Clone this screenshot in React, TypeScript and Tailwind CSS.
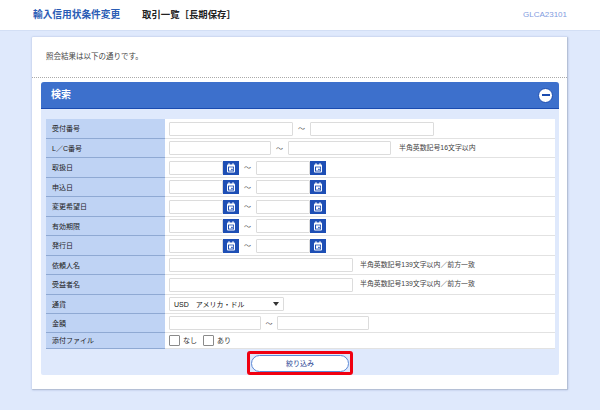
import type { ReactNode } from 'react';

const font = { jp: "font-['Liberation_Sans','Noto_Sans_CJK_JP',sans-serif]" };

function TextBox({ className }: { className: string }) {
  return <div className={`h-[14px] shrink-0 rounded-[1px] border border-[#dcdcdc] bg-white ${className}`} />;
}

function Tilde({ className = '' }: { className?: string }) {
  return <span className={`shrink-0 text-center text-[7px] leading-none text-[#555] ${className}`}>～</span>;
}

function CalendarButton() {
  return (
    <div className="flex h-[14px] w-[16px] shrink-0 items-center justify-center bg-[#1e4fb5]">
      <svg width="10" height="10" viewBox="0 0 10 10" aria-hidden="true">
        <rect x="1" y="1.5" width="8" height="8" rx="1" fill="#fff" />
        <rect x="2.4" y="0.3" width="1.2" height="2" fill="#fff" />
        <rect x="6.4" y="0.3" width="1.2" height="2" fill="#fff" />
        <rect x="2" y="3.6" width="6" height="4.9" fill="#1e4fb5" />
        <rect x="3" y="4.4" width="4.2" height="3.2" fill="#fff" />
        <rect x="5.2" y="5.8" width="1.5" height="1.4" fill="#1e4fb5" />
      </svg>
    </div>
  );
}

function DateRange() {
  return (
    <>
      <TextBox className="w-[54px]" />
      <CalendarButton />
      <Tilde className="w-[17px]" />
      <TextBox className="w-[54px]" />
      <CalendarButton />
    </>
  );
}

function Note({ children, className = '' }: { children: ReactNode; className?: string }) {
  return <span className={`whitespace-nowrap text-[6.9px] leading-none text-[#444] ${className}`}>{children}</span>;
}

function Check({ label }: { label: string }) {
  return (
    <div className="flex items-center">
      <div className="h-[11px] w-[11px] rounded-[1px] border border-[#8a8a8a] bg-white" />
      <span className="ml-[3px] text-[7px] leading-none text-[#333]">{label}</span>
    </div>
  );
}

const rows: { label: string; height: string; content: ReactNode }[] = [
  {
    label: '受付番号',
    height: 'h-[20px]',
    content: (
      <>
        <TextBox className="w-[124px]" />
        <Tilde className="w-[17px]" />
        <TextBox className="w-[124px]" />
      </>
    ),
  },
  {
    label: 'L／C番号',
    height: 'h-[19px]',
    content: (
      <>
        <TextBox className="w-[102px]" />
        <Tilde className="w-[17px]" />
        <TextBox className="w-[103px]" />
        <Note className="ml-[8px]">半角英数記号16文字以内</Note>
      </>
    ),
  },
  { label: '取扱日', height: 'h-[20px]', content: <DateRange /> },
  { label: '申込日', height: 'h-[19px]', content: <DateRange /> },
  { label: '変更希望日', height: 'h-[20px]', content: <DateRange /> },
  { label: '有効期限', height: 'h-[19px]', content: <DateRange /> },
  { label: '発行日', height: 'h-[20px]', content: <DateRange /> },
  {
    label: '依頼人名',
    height: 'h-[19px]',
    content: (
      <>
        <TextBox className="w-[184px]" />
        <Note className="ml-[7px]">半角英数記号139文字以内／前方一致</Note>
      </>
    ),
  },
  {
    label: '受益者名',
    height: 'h-[20px]',
    content: (
      <>
        <TextBox className="w-[184px]" />
        <Note className="ml-[7px]">半角英数記号139文字以内／前方一致</Note>
      </>
    ),
  },
  {
    label: '通貨',
    height: 'h-[19px]',
    content: (
      <div className="flex h-[14px] w-[115px] items-center justify-between rounded-[1px] border border-[#dcdcdc] bg-white pl-[4px] pr-[2px]">
        <span className="text-[7px] leading-none text-[#111]">
          USD<span className="ml-[7px]">アメリカ・ドル</span>
        </span>
        <svg width="8" height="6" viewBox="0 0 8 6" className="mr-[1px]" aria-hidden="true">
          <path d="M1 1h6L4 5z" fill="#333" />
        </svg>
      </div>
    ),
  },
  {
    label: '金額',
    height: 'h-[19px]',
    content: (
      <>
        <TextBox className="w-[92px]" />
        <Tilde className="w-[16px]" />
        <TextBox className="w-[92px]" />
      </>
    ),
  },
  {
    label: '添付ファイル',
    height: 'h-[16px]',
    content: (
      <div className="flex items-center gap-[6px]">
        <Check label="なし" />
        <Check label="あり" />
      </div>
    ),
  },
];

export default function App() {
  return (
    <div className={`h-[410px] w-[600px] overflow-hidden bg-[#dfe9fc] ${font.jp}`}>
      <header className="flex h-[31px] items-center border-b border-[#d3dff5] bg-white px-[33px]">
        <h1 className="w-[109px] whitespace-nowrap text-[9.7px] font-bold leading-none text-[#2a5cb5]">輸入信用状条件変更</h1>
        <h2 className="whitespace-nowrap text-[9.4px] font-bold leading-none text-[#222]">取引一覧［長期保存］</h2>
        <span className="ml-auto text-[8px] leading-none text-[#7f9be0]">GLCA23101</span>
      </header>

      <main className="mx-[32px] mt-[6px] h-[353px] rounded-[1px] border-b border-r border-[#b5c0d6] bg-white shadow-[0_0_2px_rgba(120,140,190,0.6)]">
        <p className="flex h-[40px] items-center pl-[14px] text-[7.5px] leading-none text-[#444]">照会結果は以下の通りです。</p>
        <div className="border-t border-dotted border-[#aaa]" />

        <section className="ml-[9px] mr-[8px] mt-[4px] rounded-t-[3px] rounded-b-[2px] bg-[#dfe9fc]">
          <div className="flex h-[27px] items-center justify-between rounded-t-[3px] border-b border-[#1a4bb0] bg-[#3d70cc] pl-[10px] pr-[6px]">
            <span className="text-[10px] font-bold leading-none text-white">検索</span>
            <div className="flex h-[15px] w-[15px] items-center justify-center rounded-full border border-[#1a4bb0] bg-white">
              <div className="h-[1.5px] w-[8px] bg-[#1a4bb0]" />
            </div>
          </div>

          <div className="ml-[5px] mt-[10px] w-[509px] bg-white">
            {rows.map((row) => (
              <div key={row.label} className={`flex ${row.height} border-b border-[#e2e2e2]`}>
                <div className="-mb-px flex w-[119px] shrink-0 items-center border-b border-[#8fa9d3] bg-[#bfd3f4] pl-[6px] text-[7px] leading-none text-[#222]">
                  {row.label}
                </div>
                <div className="flex min-w-0 flex-1 items-center pl-[4px]">{row.content}</div>
              </div>
            ))}
          </div>

          <div className="flex h-[26px] justify-center pt-[2px]">
            <div className="flex h-[24px] w-[106px] items-center justify-center rounded-[3px] border-[3px] border-[#f00010]">
              <button className="h-[17px] w-[98px] shrink-0 rounded-full border border-[#5d8ad6] bg-white text-[7px] leading-none text-[#1f3f94]">
                絞り込み
              </button>
            </div>
          </div>
        </section>
      </main>
    </div>
  );
}
